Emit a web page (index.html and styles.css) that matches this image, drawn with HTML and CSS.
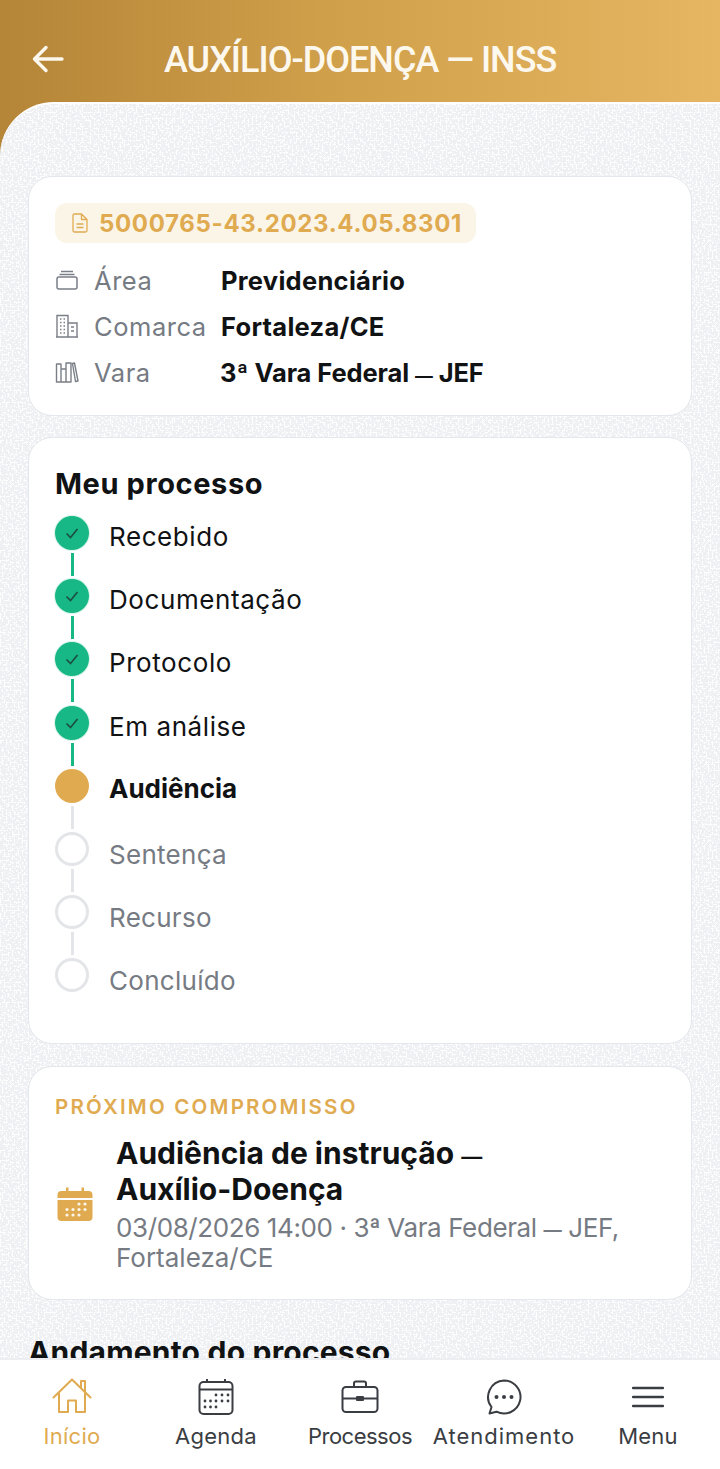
FILE: index.html
```html
<!DOCTYPE html>
<html lang="pt-BR">
<head>
<meta charset="utf-8">
<title>Auxílio-Doença — INSS</title>
<link rel="stylesheet" href="styles.css">
</head>
<body>
<div class="app">
  <header class="topbar">
    <svg class="back" viewBox="0 0 32 28" width="32" height="28"><path d="M30 14H3M14 2.500 2.500 14 14 25.500" fill="none" stroke="#fdf8ee" stroke-width="3.400" stroke-linecap="round" stroke-linejoin="round"/></svg>
    <h1 class="title">AUXÍLIO-DOENÇA — INSS</h1>
  </header>
  <main class="content">
    <section class="card info">
      <div class="badge">
        <svg viewBox="0 0 16 20" width="16" height="20"><path d="M2.500 1h7L15 6.500v11a1.500 1.500 0 0 1-1.500 1.500h-11A1.500 1.500 0 0 1 1 17.500v-15A1.500 1.500 0 0 1 2.500 1ZM9.500 1v5.500H15M4.500 11h7M4.500 14.500h7" fill="none" stroke="#e0ab50" stroke-width="1.300" stroke-linejoin="round"/></svg>
        <span>5000765-43.2023.4.05.8301</span>
      </div>
      <dl class="facts">
        <div class="fact">
          <dt><svg viewBox="0 0 24 24" width="24" height="24"><path d="M6 3.500h12M4.500 6.500h15" fill="none" stroke="#7a7f87" stroke-width="1.300"/><rect x="2" y="9" width="20" height="12" rx="2" fill="none" stroke="#7a7f87" stroke-width="1.500"/></svg><span>Área</span></dt>
          <dd>Previdenciário</dd>
        </div>
        <div class="fact">
          <dt><svg viewBox="0 0 24 24" width="24" height="24"><path d="M2 23V1.500h11V23M13 9h9v14M1 23h22M5 5h1.500M8.500 5H10M5 8.500h1.500M8.500 8.500H10M5 12h1.500M8.500 12H10M5 15.500h1.500M8.500 15.500H10M5 19h1.500M8.500 19H10M16 13h3M16 17h3" fill="none" stroke="#7a7f87" stroke-width="1.400"/></svg><span>Comarca</span></dt>
          <dd>Fortaleza/CE</dd>
        </div>
        <div class="fact">
          <dt><svg viewBox="0 0 24 24" width="24" height="24"><path d="M1.500 4h4.500v18H1.500ZM6 9h5v13H6ZM11 3h5v19h-5ZM17.500 3.500l2-.5 3.500 18-2.500.5Z" fill="none" stroke="#7a7f87" stroke-width="1.400" stroke-linejoin="round"/></svg><span>Vara</span></dt>
          <dd class="vara-value">3ª Vara Federal <span class="dash">—</span> JEF</dd>
        </div>
      </dl>
    </section>

    <section class="card process">
      <h2 class="card-title">Meu processo</h2>
      <ol class="steps">
        <li class="step done"><div class="marker"><span class="dot"><svg viewBox="0 0 16 16" width="16" height="16"><path d="M2.500 8.500 6.500 12.500 13.500 4" fill="none" stroke="#1d4f41" stroke-width="1.700"/></svg></span><span class="line"></span></div><span class="label">Recebido</span></li>
        <li class="step done"><div class="marker"><span class="dot"><svg viewBox="0 0 16 16" width="16" height="16"><path d="M2.500 8.500 6.500 12.500 13.500 4" fill="none" stroke="#1d4f41" stroke-width="1.700"/></svg></span><span class="line"></span></div><span class="label">Documentação</span></li>
        <li class="step done"><div class="marker"><span class="dot"><svg viewBox="0 0 16 16" width="16" height="16"><path d="M2.500 8.500 6.500 12.500 13.500 4" fill="none" stroke="#1d4f41" stroke-width="1.700"/></svg></span><span class="line"></span></div><span class="label">Protocolo</span></li>
        <li class="step done"><div class="marker"><span class="dot"><svg viewBox="0 0 16 16" width="16" height="16"><path d="M2.500 8.500 6.500 12.500 13.500 4" fill="none" stroke="#1d4f41" stroke-width="1.700"/></svg></span><span class="line"></span></div><span class="label">Em análise</span></li>
        <li class="step current"><div class="marker"><span class="dot"></span><span class="line"></span></div><span class="label">Audiência</span></li>
        <li class="step todo"><div class="marker"><span class="dot"></span><span class="line"></span></div><span class="label">Sentença</span></li>
        <li class="step todo"><div class="marker"><span class="dot"></span><span class="line"></span></div><span class="label">Recurso</span></li>
        <li class="step todo last"><div class="marker"><span class="dot"></span></div><span class="label">Concluído</span></li>
      </ol>
    </section>

    <section class="card next">
      <h3 class="eyebrow">PRÓXIMO COMPROMISSO</h3>
      <div class="appointment">
        <svg class="cal" viewBox="0 0 36 36" width="36" height="36"><path d="M9 1.500h2.500V5h13V1.500H27V5h4.500A4 4 0 0 1 35.500 9v3H.5V9a4 4 0 0 1 4-4H9Z" fill="#e0ab50"/><path d="M.5 14h35v17a4 4 0 0 1-4 4h-27a4 4 0 0 1-4-4Z" fill="#e0ab50"/><g fill="#fdf6e8"><circle cx="22" cy="18" r="1.600"/><circle cx="28" cy="18" r="1.600"/><circle cx="10" cy="23.500" r="1.600"/><circle cx="16" cy="23.500" r="1.600"/><circle cx="22" cy="23.500" r="1.600"/><circle cx="28" cy="23.500" r="1.600"/><circle cx="10" cy="29" r="1.600"/><circle cx="16" cy="29" r="1.600"/><circle cx="22" cy="29" r="1.600"/></g></svg>
        <div class="appt-text">
          <p class="appt-title">Audiência de instrução <span class="dash">—</span> Auxílio-Doença</p>
          <p class="appt-meta"><span class="tight">03/08/2026 14:00 · 3ª Vara Federal <span class="dash">—</span> JEF,</span> Fortaleza/CE</p>
        </div>
      </div>
    </section>

    <h2 class="section-title">Andamento do processo</h2>
  </main>
  <nav class="tabbar">
    <a class="tab active">
      <svg viewBox="0 0 40 38" width="40" height="38"><path d="M1.500 19.500 20 1.500l18.500 18M29 10V3h4v11.500M7 15.500V34h9V22.500h8V34h9V15.500" fill="none" stroke="#e0ab50" stroke-width="2" stroke-linejoin="round" stroke-linecap="round"/></svg>
      <span>Início</span>
    </a>
    <a class="tab">
      <svg viewBox="0 0 36 38" width="36" height="38"><rect x="1.500" y="4" width="33" height="32" rx="4" fill="none" stroke="#3a3d42" stroke-width="2"/><path d="M1.500 11.500h33M9 1v4M27 1v4" fill="none" stroke="#3a3d42" stroke-width="2"/><g fill="#3a3d42"><circle cx="18" cy="17" r="1.400"/><circle cx="24" cy="17" r="1.400"/><circle cx="30" cy="17" r="1.400"/><circle cx="7" cy="23" r="1.400"/><circle cx="12.500" cy="23" r="1.400"/><circle cx="18" cy="23" r="1.400"/><circle cx="24" cy="23" r="1.400"/><circle cx="30" cy="23" r="1.400"/><circle cx="7" cy="29" r="1.400"/><circle cx="12.500" cy="29" r="1.400"/><circle cx="18" cy="29" r="1.400"/></g></svg>
      <span>Agenda</span>
    </a>
    <a class="tab processos">
      <svg viewBox="0 0 38 36" width="38" height="36"><path d="M13 8V4.500a2 2 0 0 1 2-2h8a2 2 0 0 1 2 2V8" fill="none" stroke="#3a3d42" stroke-width="2"/><rect x="1.500" y="8" width="35" height="25" rx="3.500" fill="none" stroke="#3a3d42" stroke-width="2"/><path d="M1.500 19.500H15M23 19.500h13.500" stroke="#3a3d42" stroke-width="2"/><rect x="15" y="17" width="8" height="5" rx="1" fill="#3a3d42"/></svg>
      <span>Processos</span>
    </a>
    <a class="tab atendimento">
      <svg viewBox="0 0 36 36" width="36" height="36"><path d="M18 1.500a16.500 16.500 0 1 1-7.500 31.200L3.500 34.500l2-6.500A16.500 16.500 0 0 1 18 1.500Z" fill="none" stroke="#3a3d42" stroke-width="2" stroke-linejoin="round"/><circle cx="10.500" cy="18" r="2" fill="#3a3d42"/><circle cx="18" cy="18" r="2" fill="#3a3d42"/><circle cx="25.500" cy="18" r="2" fill="#3a3d42"/></svg>
      <span>Atendimento</span>
    </a>
    <a class="tab">
      <svg viewBox="0 0 32 36" width="32" height="36"><path d="M1 9h30M1 18h30M1 27h30" fill="none" stroke="#3a3d42" stroke-width="2.400" stroke-linecap="round"/></svg>
      <span>Menu</span>
    </a>
  </nav>
</div>
</body>
</html>
```
FILE: styles.css
```css
* { box-sizing: border-box; }
html, body { margin: 0; padding: 0; }
body { font-family: Inter, "Noto Sans", sans-serif; color: #101214; background: #fff; }
.app { width: 720px; height: 1469px; overflow: hidden; display: flex; flex-direction: column; }

.topbar {
  flex: none; height: 160px; padding: 0 32px 42px;
  display: flex; align-items: center;
  background: linear-gradient(90deg, #b58538 0%, #d09f4a 45%, #e7b662 100%);
}
.back { flex: none; }
.title {
  margin: 2px 0 0 100px; font-family: Roboto, sans-serif; font-weight: 500; font-size: 36px;
  color: #fdf8ee; letter-spacing: -1px; white-space: nowrap;
}

.content {
  flex: 1; min-height: 0; margin-top: -58px; padding: 72px 28px 0;
  border-top: 2px solid #fff; border-top-left-radius: 54px;
  background-color: #eef0f3;
  background-image: url("data:image/svg+xml,%3Csvg xmlns='http://www.w3.org/2000/svg' width='300' height='300'%3E%3Cfilter id='n' x='0' y='0' width='100%25' height='100%25'%3E%3CfeTurbulence type='fractalNoise' baseFrequency='.5' numOctaves='1' seed='4' stitchTiles='stitch'/%3E%3CfeColorMatrix values='0 0 0 0 1 0 0 0 0 1 0 0 0 0 1 12 0 0 0 -6'/%3E%3C/filter%3E%3Crect width='300' height='300' filter='url(%23n)'/%3E%3C/svg%3E");
  overflow: hidden;
}
.card { background: #fff; border: 1px solid #e4e7eb; border-radius: 24px; padding: 0 26px; }
.dash { font-size: 70%; font-weight: 600; line-height: 0; }

.info { height: 240px; padding-top: 26px; }
.badge {
  display: inline-flex; align-items: center; gap: 11px; height: 40px; padding: 0 14px 0 17px;
  background: #fbf5e8; border-radius: 12px; color: #e0ab50; font-weight: 700; font-size: 24px; letter-spacing: .66px;
}
.facts { margin: 14px 0 0; }
.fact { display: flex; align-items: center; height: 46px; }
.fact dt { display: flex; align-items: center; gap: 15px; width: 166px; flex: none; color: #767b83; font-size: 25.500px; letter-spacing: .55px; }
.fact dt svg { flex: none; }
.fact dd { margin: 0; font-weight: 700; font-size: 25.500px; letter-spacing: .28px; }
.fact dd.vara-value { letter-spacing: -.1px; margin-left: -1px; }

.process { height: 607px; margin-top: 21px; padding-top: 29px; }
.card-title { margin: 0; font-size: 29px; font-weight: 700; line-height: 34px; letter-spacing: .6px; }
.steps { list-style: none; margin: 15px 0 0; padding: 0; }
.step { display: flex; height: 63.200px; }
.marker { width: 34px; flex: none; display: flex; flex-direction: column; align-items: center; gap: 3px; }
.dot { flex: none; width: 34px; height: 34px; border-radius: 50%; display: flex; align-items: center; justify-content: center; }
.line { flex: none; width: 3px; height: 23px; }
.label { margin-left: 20px; font-size: 26px; line-height: 42px; letter-spacing: .58px; }
.done .dot { background: #17b886; box-shadow: 0 0 0 1px #d8f3ea; }
.done .line { background: #17b886; }
.current .dot { background: #e0ab50; }
.current .label { font-weight: 700; line-height: 40px; letter-spacing: 0; }
.current .line, .todo .line { background: #e3e5e9; }
.todo .dot { border: 3px solid #e3e5e9; background: #fff; }
.todo .label { color: #767b83; line-height: 45px; letter-spacing: .28px; }

.next { height: 234px; margin-top: 22px; padding-top: 27px; }
.eyebrow { margin: 0; font-size: 20.500px; line-height: 26px; font-weight: 600; letter-spacing: 2.200px; color: #e0ab50; }
.appointment { display: flex; align-items: center; gap: 23px; margin-top: 15px; margin-left: 2px; }
.cal { flex: none; }
.appt-text { width: 530px; }
.appt-title { margin: 0; font-size: 30px; line-height: 36px; font-weight: 700; width: 430px; }
.appt-meta { margin: 6px 0 0; font-size: 26px; line-height: 30px; color: #767b83; }
.tight { letter-spacing: -.4px; }

.section-title { margin: 34px 0 0; font-size: 30px; line-height: 36px; font-weight: 700; white-space: nowrap; letter-spacing: .2px; }

.tabbar {
  flex: none; height: 111px; display: grid; grid-template-columns: repeat(5, 144px);
  background: #fff; border-top: 2px solid #eceef1; position: relative;
}
.tab { display: flex; flex-direction: column; align-items: center; padding-top: 18px; color: #3a3d42; }
.tab svg { height: 38px; flex: none; }
.tab span { margin-top: 7px; font-size: 22px; line-height: 26px; white-space: nowrap; letter-spacing: .25px; }
.tab.processos span { letter-spacing: -.5px; }
.tab.atendimento span { letter-spacing: 1px; }
.tab.active { color: #e0ab50; }
```
